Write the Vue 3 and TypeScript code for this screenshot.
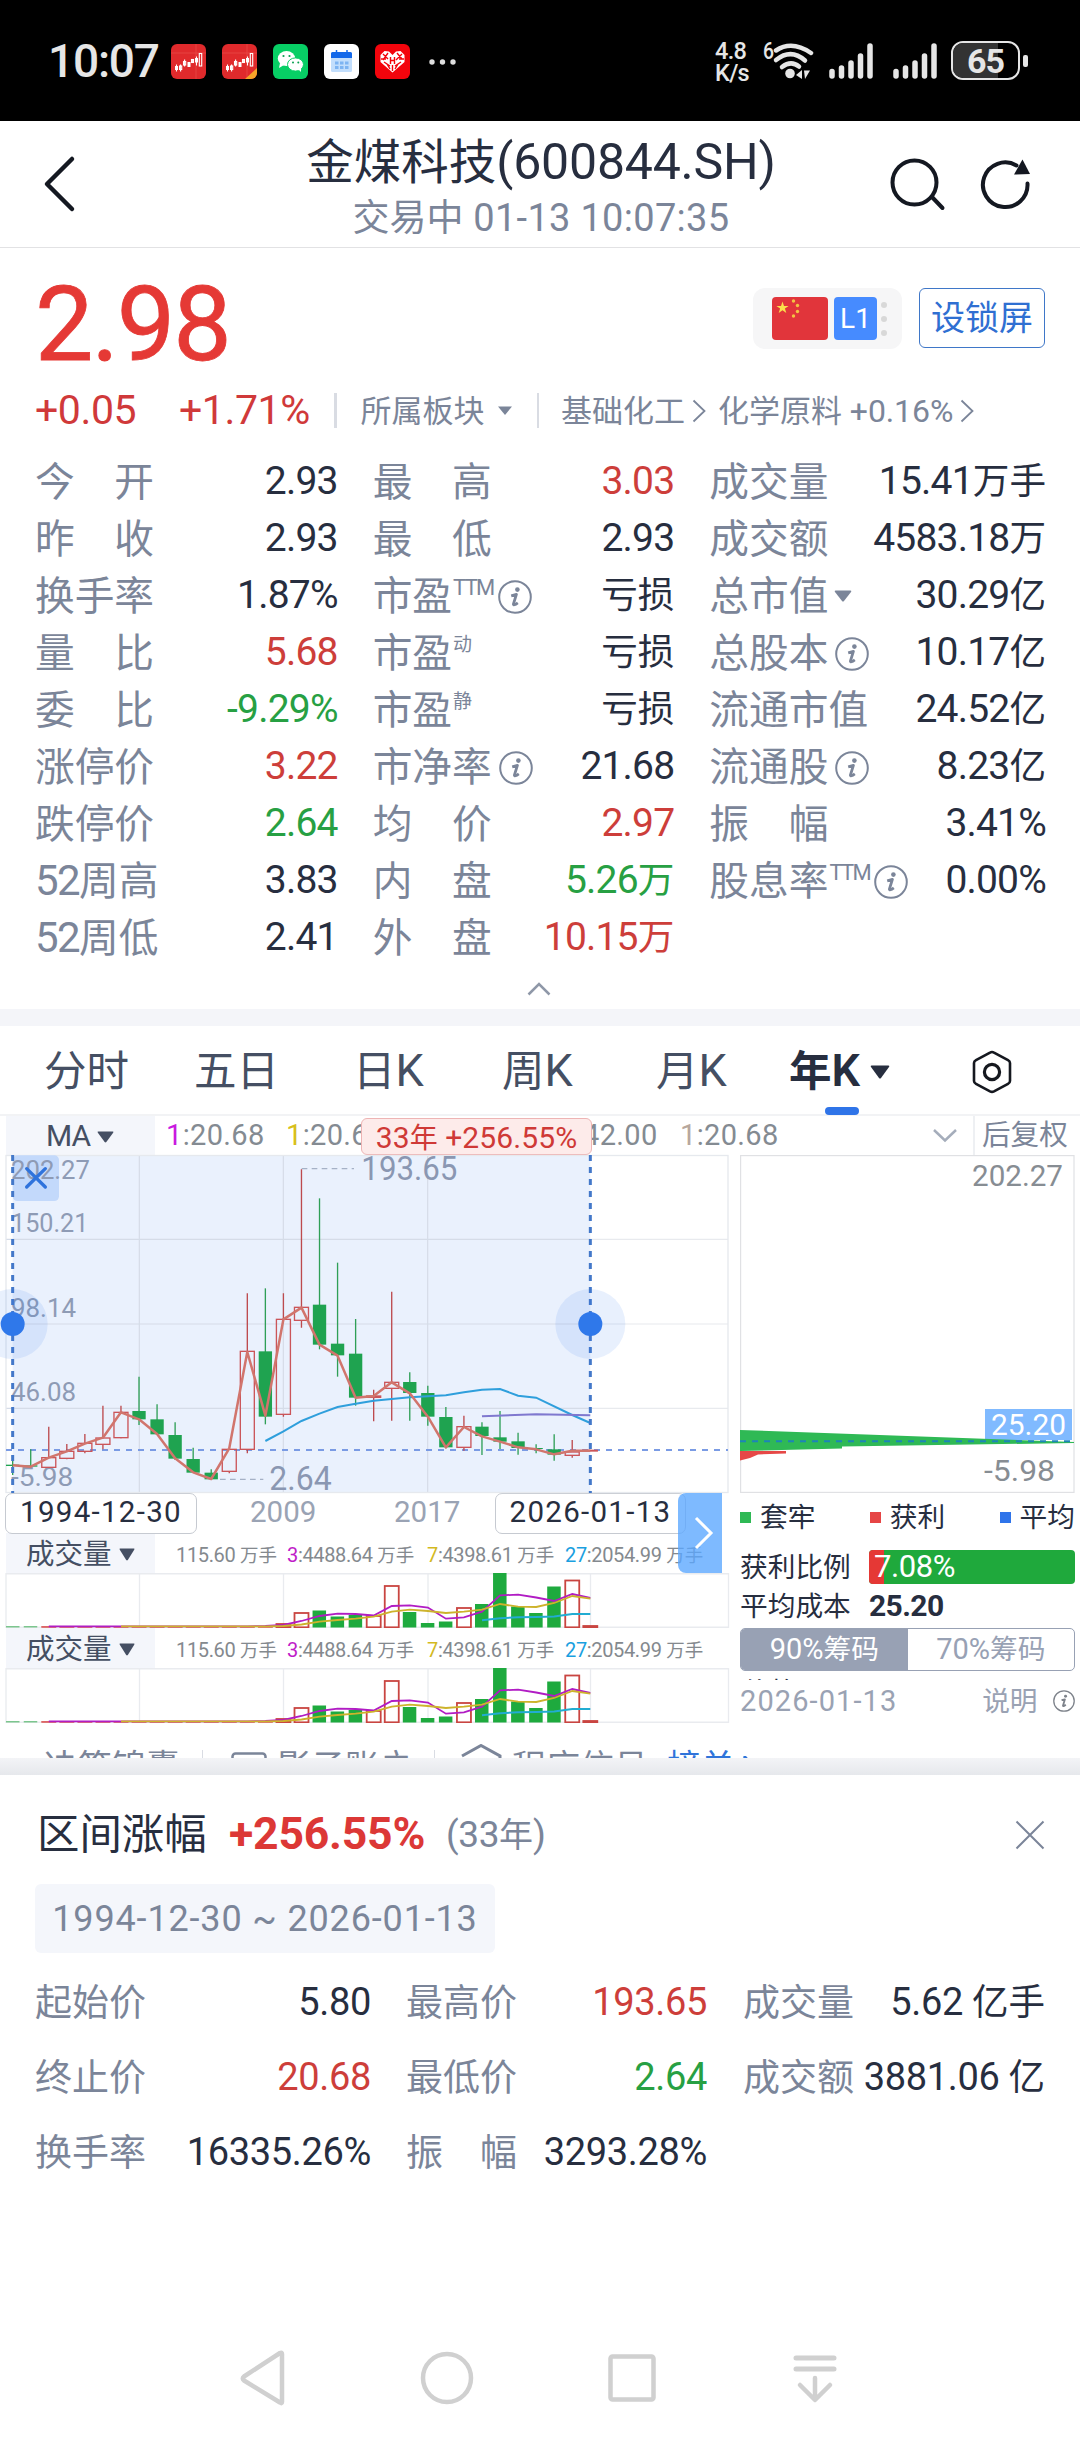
<script setup lang="ts">
import { h, type FunctionalComponent } from 'vue'

// Splits a string into Latin and CJK runs so each can have its own size.
const Tx: FunctionalComponent<{ s: string }> = (props) =>
  h(
    'span',
    { class: 'tx' },
    (props.s.match(/[\u3000-\u9fff]+|[^\u3000-\u9fff]+/g) ?? []).map((run) =>
      /[\u3000-\u9fff]/.test(run) ? h('span', { class: 'cjk' }, run) : run,
    ),
  )
Tx.props = ['s']

const InfoIcon: FunctionalComponent<{ size: number }> = (props) =>
  h('svg', { class: 'info-icon', width: props.size, height: props.size, viewBox: '0 0 34 34' }, [
    h('circle', { cx: 17, cy: 17, r: 15.8, fill: 'none', stroke: 'currentColor', 'stroke-width': 2 }),
    h('circle', { cx: 19.4, cy: 9.6, r: 2.3, fill: 'currentColor' }),
    h('path', {
      d: 'M13.2 15.8 L18.4 14.4 L15.4 24.2 Q15.4 26 19.8 22.8',
      fill: 'none', stroke: 'currentColor', 'stroke-width': 2.8, 'stroke-linejoin': 'round',
    }),
  ])
InfoIcon.props = ['size']

type Tone = 'n' | 'r' | 'g'
interface Quote { label: string; value: string; tone?: Tone; sup?: string; info?: boolean; drop?: boolean }

const quotes: Quote[][] = [
  [
    { label: '今　开', value: '2.93' },
    { label: '昨　收', value: '2.93' },
    { label: '换手率', value: '1.87%' },
    { label: '量　比', value: '5.68', tone: 'r' },
    { label: '委　比', value: '-9.29%', tone: 'g' },
    { label: '涨停价', value: '3.22', tone: 'r' },
    { label: '跌停价', value: '2.64', tone: 'g' },
    { label: '52周高', value: '3.83' },
    { label: '52周低', value: '2.41' },
  ],
  [
    { label: '最　高', value: '3.03', tone: 'r' },
    { label: '最　低', value: '2.93' },
    { label: '市盈', sup: 'TTM', info: true, value: '亏损' },
    { label: '市盈', sup: '动', value: '亏损' },
    { label: '市盈', sup: '静', value: '亏损' },
    { label: '市净率', info: true, value: '21.68' },
    { label: '均　价', value: '2.97', tone: 'r' },
    { label: '内　盘', value: '5.26万', tone: 'g' },
    { label: '外　盘', value: '10.15万', tone: 'r' },
  ],
  [
    { label: '成交量', value: '15.41万手' },
    { label: '成交额', value: '4583.18万' },
    { label: '总市值', drop: true, value: '30.29亿' },
    { label: '总股本', info: true, value: '10.17亿' },
    { label: '流通市值', value: '24.52亿' },
    { label: '流通股', info: true, value: '8.23亿' },
    { label: '振　幅', value: '3.41%' },
    { label: '股息率', sup: 'TTM', info: true, value: '0.00%' },
  ],
]

const range: Quote[][] = [
  [
    { label: '起始价', value: '5.80' },
    { label: '终止价', value: '20.68', tone: 'r' },
    { label: '换手率', value: '16335.26%' },
  ],
  [
    { label: '最高价', value: '193.65', tone: 'r' },
    { label: '最低价', value: '2.64', tone: 'g' },
    { label: '振　幅', value: '3293.28%' },
  ],
  [
    { label: '成交量', value: '5.62 亿手' },
    { label: '成交额', value: '3881.06 亿' },
  ],
]

// K-line drawing units are thirds of a pixel.
const PITCH = 54.15
const cx = (i: number) => 38 + PITCH * i
// [direction, high, body top, body bottom, low]
const candles: [Tone, number, number, number, number][] = [
  ['g', 1275, 1304, 1308, 1335], ['g', 1258, 1306, 1310, 1310], ['r', 1190, 1283, 1312, 1312],
  ['r', 1242, 1264, 1285, 1288], ['r', 1212, 1240, 1264, 1270], ['r', 1127, 1224, 1243, 1258],
  ['r', 1127, 1147, 1223, 1225], ['g', 1040, 1143, 1168, 1185], ['g', 1123, 1168, 1213, 1213],
  ['g', 1177, 1215, 1286, 1290], ['g', 1253, 1287, 1328, 1328], ['g', 1318, 1328, 1348, 1348],
  ['r', 1255, 1258, 1324, 1330], ['r', 790, 964, 1258, 1270], ['g', 775, 964, 1160, 1183],
  ['r', 790, 868, 1153, 1160], ['r', 418, 832, 871, 893], ['g', 505, 824, 944, 958],
  ['g', 698, 941, 976, 1040], ['g', 867, 971, 1103, 1127], ['r', 1079, 1098, 1102, 1174],
  ['r', 785, 1057, 1075, 1172], ['g', 1027, 1056, 1089, 1172], ['g', 1067, 1089, 1160, 1187],
  ['g', 1131, 1161, 1252, 1255], ['r', 1157, 1190, 1252, 1262], ['g', 1177, 1190, 1218, 1275],
  ['g', 1143, 1222, 1235, 1257], ['g', 1208, 1234, 1254, 1274], ['g', 1243, 1254, 1257, 1270],
  ['g', 1213, 1258, 1274, 1292], ['r', 1230, 1266, 1276, 1283], ['r', 1261, 1261, 1263, 1263],
]
const line = (pts: [number, number][]) => pts.map(([i, y]) => `${cx(i).toFixed(1)},${y}`).join(' ')
const closes = [
  1306, 1310, 1283, 1264, 1241, 1223, 1147, 1168, 1212, 1285, 1327, 1347, 1255, 966, 1157, 868, 833,
  944, 977, 1103, 1098, 1057, 1090, 1160, 1252, 1191, 1219, 1235, 1252, 1258, 1273, 1262, 1262,
]
const ma1 = line(closes.map((y, i) => [i, y]))
const ma2 = line([[14, 1233], [15, 1204], [16, 1173], [17, 1151], [18, 1131], [19, 1121], [20, 1112], [22, 1102], [24, 1096], [25, 1087], [26, 1079], [27, 1077], [28, 1097], [29, 1103], [31, 1155], [32, 1179]])
const ma3 = line([[26, 1159], [29, 1153], [32, 1156]])

// Volume bars: direction and top edge, in px from the top of a 55px plot.
const volume: [Tone, number][] = [
  ['g', 53], ['g', 53], ...Array.from({ length: 13 }, (): [Tone, number] => ['r', 53.5]),
  ['r', 51], ['r', 40], ['g', 37.5], ['g', 43.5], ['g', 42], ['r', 43], ['r', 13], ['g', 39],
  ['g', 50], ['g', 48.5], ['r', 35], ['g', 31], ['g', 0], ['g', 33.5], ['g', 40], ['g', 13.5],
  ['r', 7.5], ['r', 53],
]
const vx = (i: number) => 12.7 + 18.05 * i
const vline = (from: number, ys: number[]) => ys.map((y, k) => `${vx(from + k).toFixed(1)},${y}`).join(' ')
const v3 = vline(2, [53.3, 53.3, 53.3, 53.3, 53.3, 53.3, 53.3, 53.3, 53.3, 53.3, 53.3, 53.3, 53, 52, 48, 43, 40.7, 41, 42.5, 33, 32.3, 34.5, 45.7, 44.3, 38.7, 22.3, 21.7, 24.5, 28, 21, 25])
const v7 = vline(6, [53.3, 53.3, 53.3, 53.3, 53.3, 53.3, 53.3, 53.3, 53.3, 53, 51.5, 48.7, 47, 45.7, 43.7, 38.7, 36.7, 38, 40, 38.7, 36.7, 31, 33.7, 34, 30, 23, 25.7])
const v27 = vline(26, [47.3, 45.3, 44.3, 44, 43.5, 41, 41])

const volumeNotes = [
  { k: '', v: '115.60 万手', w: 111, c: '' },
  { k: '3', v: ':4488.64 万手', w: 140, c: '#c01cc8' },
  { k: '7', v: ':4398.61 万手', w: 138, c: '#d3b91f' },
  { k: '27', v: ':2054.99 万手', w: 150, c: '#1aa0e0' },
]
const yLabels = [
  { t: '202.27', y: 448, w: 237 }, { t: '150.21', y: 605, w: 232 }, { t: '98.14', y: 860, w: 195 },
  { t: '46.08', y: 1112, w: 195 }, { t: '-5.98', y: 1367, w: 187 },
]
</script>

<template>
  <div class="screen">
    <header class="status">
      <span class="clock">10:07</span>
      <div class="apps">
        <svg v-for="n in 2" :key="n" width="35" height="35" viewBox="0 0 35 35">
          <rect width="35" height="35" rx="6" fill="#e02a2c" />
          <path d="M0 9H35M25 0V35" stroke="#e84a48" stroke-width=".8" />
          <g fill="#fff"><rect x="4" y="22" width="3" height="4" /><rect x="16.500" y="18" width="3" height="5" /><rect x="24" y="14" width="3" height="4.500" /></g>
          <g fill="none" stroke="#fff" stroke-width="1.1"><rect x="8.500" y="22" width="2.200" height="3.500" /><rect x="12.500" y="17.500" width="2.200" height="3.500" /><rect x="20.500" y="15.500" width="2" height="3" /><rect x="28.300" y="9.500" width="2.400" height="12.500" /><path d="M5.500 20.500v7M9.600 20.500v7M13.600 15.500v7M25.500 12.500v9" /></g>
          <path v-if="n === 2" d="M35 24V29a6 6 0 0 1-6 6H23Z" fill="#f6a428" />
        </svg>
        <svg width="35" height="35" viewBox="0 0 35 35">
          <rect width="35" height="35" rx="6" fill="#07cf65" />
          <ellipse cx="13.500" cy="14.500" rx="8.700" ry="7.500" fill="#fff" /><path d="M7 19l-1 5 5-3z" fill="#fff" />
          <ellipse cx="22.500" cy="20.500" rx="8" ry="6.600" fill="#fff" stroke="#07cf65" stroke-width="1" /><path d="M25 25l3 3v-5z" fill="#fff" />
          <g fill="#07a050"><circle cx="10.500" cy="12" r="1.100" /><circle cx="16.500" cy="12" r="1.100" /><circle cx="20" cy="18.600" r="1" /><circle cx="25.300" cy="18.600" r="1" /></g>
        </svg>
        <svg width="35" height="35" viewBox="0 0 35 35">
          <rect width="35" height="35" rx="6" fill="#fff" />
          <rect x="7" y="8" width="21" height="20" rx="1.500" fill="#c2defc" /><path d="M7 14V9.500A1.500 1.500 0 0 1 8.500 8H26.500A1.500 1.500 0 0 1 28 9.500V14Z" fill="#1268ea" />
          <path d="M12.500 6v3M23 6v3" stroke="#1268ea" stroke-width="1.500" />
          <path d="M11 17.500h3.500v3H11zM16 17.500h3.500v3H16zM21 17.500h3.500v3H21zM11 22h3.500v3H11zM16 22h3.500v3H16zM21 22h3.500v3H21z" fill="#7db4f2" />
        </svg>
        <svg width="35" height="35" viewBox="0 0 35 35">
          <rect width="35" height="35" rx="6" fill="#f3040c" />
          <path d="M17.500 28.500L5.500 18V11L9.500 7L14 7.500L17.500 11L21 7.500L25.500 7L29.500 11V18Z" fill="#fff" />
          <path d="M8 10l5 5M13 9l-5 7M22 9l5 6M27 10l-6 6M9 18l6 4M26 18l-6 4M17.500 21v6M15.500 13v7M19.500 13v7M15.500 16.500h4M6 15h5M24 15h5M12 20l3 5M23 20l-3 5" stroke="#f3040c" stroke-width="1.400" />
        </svg>
      </div>
      <svg class="more" width="28" height="8" viewBox="0 0 28 8" fill="#dedede"><circle cx="4" cy="4" r="2.700" /><circle cx="14.500" cy="4" r="2.700" /><circle cx="25" cy="4" r="2.700" /></svg>
      <div class="speed"><span>4.8</span><span>K/s</span></div>
      <svg class="wifi" width="52" height="38" viewBox="0 0 52 38">
        <text x="1" y="17" font-size="23" font-weight="500" fill="#e6e6e6" textLength="11" lengthAdjust="spacingAndGlyphs">6</text>
        <g fill="none" stroke="#e6e6e6" stroke-width="4.500" stroke-linecap="round"><path d="M14 8.500Q30-2 49 11" /><path d="M14 18Q29 6 43 18.500" /><path d="M20 25Q29 18 37 24.500" /></g>
        <circle cx="28" cy="31.500" r="4.800" fill="#e6e6e6" /><path d="M34 33l6-5v9zM42 28.500h6L43 37z" fill="#e6e6e6" />
      </svg>
      <svg v-for="n in 2" :key="n" class="signal" width="45" height="37" viewBox="0 0 45 37" stroke="#e6e6e6" stroke-width="5.500" stroke-linecap="round">
        <path d="M3 34V29.500M12.500 34V26M22 34V21M31.500 34V14M41 34V4" />
      </svg>
      <div class="battery"><i /><span>65</span></div>
      <b class="nub" />
    </header>

    <nav class="titlebar">
      <svg class="back" width="34" height="60" viewBox="0 0 34 60"><path d="M30 5L5 30L30 55" fill="none" stroke="#141821" stroke-width="4.500" stroke-linecap="round" stroke-linejoin="round" /></svg>
      <div class="titles">
        <Tx class="name" s="金煤科技(600844.SH)" />
        <Tx class="state" s="交易中 01-13 10:07:35" />
      </div>
      <svg class="search" width="58" height="56" viewBox="0 0 58 56" fill="none" stroke="#141821" stroke-width="4" stroke-linecap="round"><circle cx="25.500" cy="25.500" r="22" /><path d="M43 40L53.500 51" /></svg>
      <svg class="reload" width="52" height="56" viewBox="0 0 52 56"><path d="M47.500 26.500A22.300 22.300 0 1 1 36.500 8.500" fill="none" stroke="#141821" stroke-width="4" stroke-linecap="round" /><path d="M42.500 2.500L34 17.500L50 17Z" fill="#141821" /></svg>
    </nav>

    <section class="quote">
      <div class="price-row">
        <span class="price">2.98</span>
        <div class="market">
          <svg width="56" height="43" viewBox="0 0 56 43">
            <rect width="56" height="43" rx="4" fill="#e1353b" />
            <path d="M10.500 4.500l1.500 4.400h4.600l-3.700 2.700 1.400 4.400-3.800-2.700-3.800 2.700 1.400-4.400-3.700-2.700h4.600z" fill="#fbe14b" />
            <g fill="#f4c342"><circle cx="21.500" cy="4" r="1.700" /><circle cx="25.500" cy="8.500" r="1.700" /><circle cx="25.500" cy="14.500" r="1.700" /><circle cx="21.500" cy="19" r="1.700" /></g>
          </svg>
          <span class="level">L1</span>
          <div class="dots"><i /><i /><i /></div>
        </div>
        <button class="lock"><Tx s="设锁屏" /></button>
      </div>

      <div class="change-row">
        <span class="chg a">+0.05</span><span class="chg b">+1.71%</span>
        <i class="bar" />
        <Tx class="board" s="所属板块" />
        <svg class="tri" width="14" height="9" viewBox="0 0 14 9"><path d="M0 .5H14L7 9Z" fill="#7b8599" /></svg>
        <i class="bar second" />
        <Tx class="board base" s="基础化工" />
        <svg class="gt" width="14" height="24" viewBox="0 0 14 24"><path d="M1.500 1.500L12.500 12L1.500 22.500" fill="none" stroke="#7b8599" stroke-width="1.800" /></svg>
        <Tx class="board mat" s="化学原料 +0.16%" />
        <svg class="gt last" width="14" height="24" viewBox="0 0 14 24"><path d="M1.500 1.500L12.500 12L1.500 22.500" fill="none" stroke="#7b8599" stroke-width="1.800" /></svg>
      </div>

      <div class="grid">
        <div v-for="(col, c) in quotes" :key="c" class="col">
          <div v-for="q in col" :key="q.label + (q.sup ?? '')" class="cell">
            <div class="label">
              <Tx :s="q.label" />
              <Tx v-if="q.sup" class="sup" :class="{ ttm: q.sup === 'TTM' }" :s="q.sup" />
              <InfoIcon v-if="q.info" :size="34" />
              <svg v-if="q.drop" class="drop" width="18" height="12" viewBox="0 0 18 12"><path d="M1.500.5H16.500Q18 .5 17 2L10 11Q9 12 8 11L1 2Q0 .5 1.500.5Z" fill="#7b8599" /></svg>
            </div>
            <Tx class="value" :class="q.tone" :s="q.value" />
          </div>
        </div>
      </div>
      <svg class="fold" width="24" height="14" viewBox="0 0 24 14"><path d="M1.500 12.500L12 2L22.500 12.500" fill="none" stroke="#8f98a8" stroke-width="2.500" /></svg>
    </section>

    <div class="gap" />

    <nav class="tabs">
      <Tx class="tab t1" s="分时" /><Tx class="tab t2" s="五日" /><Tx class="tab t3" s="日K" /><Tx class="tab t4" s="周K" /><Tx class="tab t5" s="月K" />
      <div class="tab t6 on"><Tx s="年K" /><svg width="20" height="14" viewBox="0 0 20 14"><path d="M1.500.5H18.500Q20 .5 19 2L11 13Q10 14 9 13L1 2Q0 .5 1.500.5Z" fill="#272e3f" /></svg><i /></div>
      <svg class="hex" width="40" height="44" viewBox="0 0 40 44" fill="none" stroke="#15181f"><path d="M20 2Q21 2 22 2.600L36 10.200Q38 11.300 38 13V31Q38 32.700 36 33.800L22 41.400Q20 42.400 18 41.400L4 33.800Q2 32.700 2 31V13Q2 11.300 4 10.200L18 2.600Q19 2 20 2Z" stroke-width="2.600" /><circle cx="20" cy="22" r="7.600" stroke-width="3.200" /></svg>
    </nav>

    <section class="analysis">
      <div class="ma-row">
        <div class="picker"><span>MA</span><svg width="17" height="12" viewBox="0 0 20 14"><path d="M1.500.5H18.500Q20 .5 19 2L11 13Q10 14 9 13L1 2Q0 .5 1.500.5Z" fill="#454f63" /></svg></div>
        <span class="ma m1"><b style="color: #c91ae0">1</b>:20.68</span>
        <span class="ma m2"><b style="color: #d8bf1c">1</b>:20.68</span>
        <span class="ma m3"><b>1</b>:42.00</span>
        <span class="ma m4"><b style="color: #b7a79d">1</b>:20.68</span>
        <svg class="down" width="26" height="15" viewBox="0 0 26 15"><path d="M2 2L13 12.500L24 2" fill="none" stroke="#a5adbb" stroke-width="2.500" /></svg>
        <span class="adjust"><Tx s="后复权" /></span>
        <div class="range-tag"><Tx s="33年 +256.55%" /></div>
      </div>

      <div class="panes">
        <div class="left">
          <svg class="kline" width="734" height="338" viewBox="0 375 2202 1014">
            <rect x="38" y="375" width="1733" height="1014" fill="#eaf1fd" />
            <g stroke="#d5dce8" stroke-width="3.500"><path d="M18 628H1771M18 882H1771M18 1135H1771M418 375V1389M850 375V1389M1283 375V1389" /></g>
            <path d="M1771 628H2184M1771 882H2184M1771 1135H2184" stroke="#e8eaee" stroke-width="3.500" />
            <rect x="18" y="376.500" width="2166" height="1011" fill="none" stroke="#e6e9ee" stroke-width="4" />
            <rect x="38" y="376" width="139" height="137" rx="14" fill="#c3d9fb" />
            <g fill="#8e9bb5" font-size="76"><text v-for="l in yLabels" :key="l.t" x="33" :y="l.y" :textLength="l.w" lengthAdjust="spacingAndGlyphs">{{ l.t }}</text></g>
            <path d="M80 416L136 471M136 416L80 471" stroke="#2f73dc" stroke-width="10" stroke-linecap="round" />
            <path d="M905 416H1062M660 1348H790" stroke="#a5b1c6" stroke-width="4" stroke-dasharray="17 13" />
            <g fill="#8a97b2" font-size="98"><text x="1084" y="450" textLength="288" lengthAdjust="spacingAndGlyphs">193.65</text><text x="808" y="1380" textLength="187" lengthAdjust="spacingAndGlyphs">2.64</text></g>
            <path d="M18 1260H2184" stroke="#7a9be4" stroke-width="6.500" stroke-dasharray="18 18" />
            <g v-for="(k, i) in candles" :key="i">
              <template v-if="k[0] === 'g'">
                <path :d="`M${cx(i)} ${k[1]}V${k[4]}`" stroke="#2f9f57" stroke-width="4" />
                <rect :x="cx(i) - 20" :y="k[2]" width="40" :height="k[3] - k[2]" fill="#1fa350" />
              </template>
              <template v-else>
                <path :d="`M${cx(i)} ${k[1]}V${k[2]}M${cx(i)} ${k[3]}V${k[4]}`" stroke="#bd4a4e" stroke-width="4" />
                <rect :x="cx(i) - 21" :y="k[2]" width="42" :height="k[3] - k[2]" fill="none" stroke="#cb5559" stroke-width="4" />
              </template>
            </g>
            <polyline :points="ma2" fill="none" stroke="#2f9fdc" stroke-width="6" />
            <polyline :points="ma3" fill="none" stroke="#7f78cf" stroke-width="6" />
            <polyline :points="ma1" fill="none" stroke="#d1756d" stroke-width="7.500" stroke-linejoin="round" />
            <path d="M38 375V1389M1771 375V1389" stroke="#4378c9" stroke-width="9" stroke-dasharray="18 18" />
            <g fill="#2f78ea"><circle cx="38" cy="882" r="105" opacity=".11" /><circle cx="1771" cy="882" r="105" opacity=".11" /><circle cx="38" cy="882" r="36" /><circle cx="1771" cy="882" r="36" /></g>
          </svg>
          <div class="dates">
            <span class="date boxed d1">1994-12-30</span>
            <span class="date d2">2009</span>
            <span class="date d3">2017</span>
            <span class="date boxed d4">2026-01-13</span>
            <button class="expand"><svg width="20" height="34" viewBox="0 0 20 34"><path d="M2 2L17 17L2 32" fill="none" stroke="#fff" stroke-width="3" /></svg></button>
          </div>
          <div v-for="n in 2" :key="n" class="vol">
            <div class="vol-head">
              <div class="picker"><Tx s="成交量" /><svg width="16" height="13" viewBox="0 0 20 14" preserveAspectRatio="none"><path d="M1.500.5H18.500Q20 .5 19 2L11 13Q10 14 9 13L1 2Q0 .5 1.500.5Z" fill="#454f63" /></svg></div>
              <span v-for="v in volumeNotes" :key="v.k" class="note" :style="{ width: v.w + 'px' }"><b :style="{ color: v.c }">{{ v.k }}</b><Tx :s="v.v" /></span>
            </div>
            <svg width="734" height="55" viewBox="0 0 734 55">
              <path d="M6 .75H728.500V54.250H6ZM139.500 0V55M283.500 0V55M428 0V55M590.500 0V55" fill="none" stroke="#e9ebef" stroke-width="1.300" />
              <template v-for="(b, i) in volume" :key="i">
                <rect v-if="b[0] === 'g'" :x="Math.max(6, vx(i) - 7)" :y="b[1]" width="13.500" :height="54.5 - b[1]" :fill="i < 2 ? '#7cc68e' : '#1eaa3e'" />
                <rect v-else :x="vx(i) - 7" :y="b[1]" width="14" :height="54.3 - b[1]" :fill="54.3 - b[1] > 6 ? '#fff' : '#cc4541'" :stroke="i > 14 ? '#c94541' : '#d66'" :stroke-width="i > 14 ? 1.8 : 1" />
              </template>
              <polyline :points="v3" fill="none" stroke="#b11cc4" stroke-width="1.800" />
              <polyline :points="v7" fill="none" stroke="#cdb32c" stroke-width="1.800" />
              <polyline :points="v27" fill="none" stroke="#22acd2" stroke-width="2" />
            </svg>
          </div>
        </div>

        <div class="right">
          <svg width="335" height="338" viewBox="0 0 335 338">
            <rect x=".6" y=".6" width="333.400" height="336.800" fill="none" stroke="#e0e1e4" stroke-width="1.200" />
            <g fill="#878d93" font-size="29"><text x="232" y="31" textLength="91" lengthAdjust="spacingAndGlyphs">202.27</text><text x="244" y="326" textLength="71" lengthAdjust="spacingAndGlyphs">-5.98</text></g>
            <rect x="245" y="254" width="87" height="31" fill="#80baff" />
            <path d="M0 275L334 287V288L102 291.500V293.500L0 296Z" fill="#2fb955" />
            <path d="M0 296L46 296V298.500L18 299.500L10 303L0 305.500Z" fill="#e64847" />
            <path d="M0 286.300H334" stroke="#1d84b8" stroke-width="2" stroke-dasharray="6 6" />
            <text x="251" y="279.500" font-size="30" fill="#fff" textLength="75" lengthAdjust="spacingAndGlyphs">25.20</text>
          </svg>
          <div class="legend">
            <span><i style="background: #2fb955" /><Tx s="套牢" /></span>
            <span><i style="background: #e64545" /><Tx s="获利" /></span>
            <span><i style="background: #2f74ea" /><Tx s="平均" /></span>
          </div>
          <div class="ratio"><Tx class="key" s="获利比例" /><div class="gauge"><i /><span>7.08%</span></div></div>
          <div class="cost"><Tx class="key" s="平均成本" /><b>25.20</b></div>
          <div class="segment"><span class="sel"><Tx s="90%筹码" /></span><span><Tx s="70%筹码" /></span></div>
          <div class="cut"><Tx s="价格" /></div>
          <div class="foot"><span class="day">2026-01-13</span><Tx class="explain" s="说明" /><InfoIcon :size="22" /></div>
        </div>
      </div>

      <div class="tools">
        <Tx class="x1" s="决策锦囊" /><i class="s1" />
        <svg class="x2" width="36" height="30" viewBox="0 0 36 30"><rect x="1.500" y="1.500" width="33" height="27" rx="3" fill="none" stroke="#7b8599" stroke-width="2.500" /></svg>
        <Tx class="x3" s="影子账户" /><i class="s2" />
        <svg class="x4" width="42" height="40" viewBox="0 0 42 40"><path d="M2 12L21 1.500L40 12V34" fill="none" stroke="#7b8599" stroke-width="3" /></svg>
        <Tx class="x5" s="程序信号" /><Tx class="x6" s="榜单" /><svg class="x7" width="12" height="20" viewBox="0 0 12 20"><path d="M2 0L10 9" stroke="#2f74da" stroke-width="3" /></svg>
      </div>
    </section>

    <div class="shade" />

    <section class="sheet">
      <div class="sheet-head">
        <Tx class="h" s="区间涨幅" /><span class="pct">+256.55%</span><Tx class="yrs" s="(33年)" />
        <svg class="close" width="30" height="30" viewBox="0 0 30 30"><path d="M1.500 1.500L28.500 28.500M28.500 1.500L1.500 28.500" stroke="#7b8599" stroke-width="2" /></svg>
      </div>
      <div class="chip"><span>1994-12-30 ~ 2026-01-13</span></div>
      <div class="grid small">
        <div v-for="(col, c) in range" :key="c" class="col">
          <div v-for="q in col" :key="q.label" class="cell"><Tx class="label" :s="q.label" /><Tx class="value" :class="q.tone" :s="q.value" /></div>
        </div>
      </div>
    </section>

    <footer class="sysnav">
      <svg class="n1" width="46" height="56" viewBox="0 0 46 56"><path d="M42 4V52Q42 54 40 52.500L4 30.500Q1.500 28.500 4 26.500L40 3Q42 2 42 4Z" /></svg>
      <svg class="n2" width="54" height="54" viewBox="0 0 54 54"><circle cx="27" cy="27" r="24" /></svg>
      <svg class="n3" width="48" height="48" viewBox="0 0 48 48"><rect x="2.500" y="2.500" width="43" height="43" rx="2" /></svg>
      <svg class="n4" width="46" height="50" viewBox="0 0 46 50"><path d="M4 4H42M4 15H42" stroke-width="5" /><path d="M23 24V45M8 31L23 46L38 31" /></svg>
    </footer>
  </div>
</template>

<style>
body { margin: 0; background: #fff; }
.tx { white-space: pre; }
.tx .cjk { font-size: var(--cjk, .94em); line-height: 0; letter-spacing: 0; }
.info-icon { flex: none; display: block; }
</style>

<style scoped>
.screen { width: 1080px; height: 2440px; overflow: hidden; display: flex; flex-direction: column; background: #fff; color: #272e3f; font-family: Roboto, "Noto Sans CJK SC", sans-serif; line-height: 1; white-space: nowrap; }
.screen > * { flex: none; }
svg { display: block; flex: none; }
b, i { font-style: normal; font-weight: inherit; }
button { font: inherit; margin: 0; padding: 0; border: 0; background: none; }

.status { height: 121px; background: #000; color: #e6e6e6; display: flex; align-items: center; }
.clock { width: 123px; padding-left: 48px; font-size: 46px; font-weight: 500; letter-spacing: -1.2px; }
.apps { display: flex; gap: 16px; margin-top: 2px; }
.more { margin-left: 18px; margin-top: 2px; }
.speed { margin-left: 259px; width: 45px; display: flex; flex-direction: column; font-size: 23.500px; line-height: 22px; font-weight: 500; letter-spacing: -.7px; margin-top: 3px; }
.wifi { margin-left: 2px; width: 52px; }
.signal { margin-left: 15px; margin-right: 4px; }
.battery { position: relative; box-sizing: border-box; width: 69px; height: 39px; margin-left: 9px; border: 2.5px solid #e6e6e6; border-radius: 12px; display: flex; align-items: center; justify-content: center; font-size: 34px; font-weight: 700; letter-spacing: -1px; overflow: hidden; }
.battery i { position: absolute; left: 0; top: 0; bottom: 0; width: 45px; background: #333; }
.battery span { position: relative; }
.nub { width: 5px; height: 12px; margin-left: 3px; border-radius: 2px; background: #e6e6e6; }

.titlebar { box-sizing: border-box; height: 127px; border-bottom: 1px solid #e2e2e4; display: flex; align-items: flex-start; }
.back { margin: 33px 0 0 42px; }
.titles { margin-left: 232px; width: 466px; padding-top: 15px; display: flex; flex-direction: column; align-items: center; }
.name { font-size: 50px; line-height: 52px; letter-spacing: -.2px; --cjk: 47.5px; }
.state { margin-top: 8px; font-size: 38px; line-height: 44px; color: #7b8599; --cjk: 37px; letter-spacing: .3px; }
.search { margin: 36px 0 0 115px; }
.reload { margin: 36px 0 0 33px; }

.quote { height: 761px; display: flex; flex-direction: column; }
.price-row { height: 123px; padding: 0 35px; display: flex; align-items: flex-start; }
.price { width: 718px; margin-top: 25px; color: #e53935; font-size: 104px; letter-spacing: -2px; -webkit-text-stroke: .8px #e53935; }
.market { box-sizing: border-box; margin-top: 40px; width: 149px; height: 61px; padding-left: 19px; border-radius: 12px; background: #f6f6f7; display: flex; align-items: center; }
.level { margin-left: 6px; width: 43px; height: 43px; border-radius: 4px; background: #468bff; color: #fff; font-size: 28px; line-height: 43px; text-align: center; }
.dots { margin-left: 4px; display: flex; flex-direction: column; gap: 8px; }
.dots i { width: 6px; height: 6px; border-radius: 50%; background: #d8d8d8; }
.lock { box-sizing: border-box; width: 126px; height: 60px; margin: 40px 0 0 17px; border: 1.5px solid #3f77c8; border-radius: 6px; font-size: 34px; color: #2f6fd2; --cjk: 34px; line-height: 1; }
.change-row { height: 79px; padding-left: 35px; display: flex; align-items: center; color: #7b8599; }
.chg { color: #d0393a; font-size: 41px; letter-spacing: -.4px; }
.a { width: 144px; } .b { width: 155px; }
.bar { width: 2.5px; height: 35px; background: #d9dce3; }
.board { margin-left: 24px; font-size: 32px; --cjk: 31px; letter-spacing: -.1px; }
.base { margin-left: 22px; }
.tri { margin-left: 13px; }
.bar.second { margin-left: 25px; }
.gt { margin-left: 7px; } .mat { margin-left: 12px; } .gt.last { margin-left: 7px; }
.grid { display: flex; gap: 36px; padding: 3px 35px 0; }
.col { width: 302px; display: flex; flex-direction: column; }
.col:nth-child(3) { width: 336px; }
.col:nth-child(2) { width: 301px; }
.cell { height: 57px; display: flex; align-items: center; justify-content: space-between; }
.label { display: flex; align-items: center; color: #7b8599; font-size: 42px; --cjk: 39.700px; letter-spacing: -1.600px; }
span.label { display: inline; }
.label .info-icon { margin-left: 7px; margin-top: 2px; }
.sup { font-size: 21px; --cjk: 19px; align-self: flex-start; margin-left: 1px; letter-spacing: 0; margin-top: 2px; }
.sup.ttm { width: 38px; font-size: 22px; letter-spacing: -1.700px; }
.drop { margin-left: 6px; margin-top: 1px; }
.value { font-size: 39px; letter-spacing: -.8px; --cjk: 36.6px; margin-right: -1px; }
.r { color: #cd3e3a; } .g { color: #27a043; }
.fold { margin: 16px 0 0 527px; }
.gap { height: 17px; background: #f4f5f9; }

.tabs { height: 90px; display: flex; align-items: center; font-size: 45px; color: #454f63; --cjk: 42.500px; box-sizing: border-box; border-bottom: 2px solid #f2f3f5; }
.t1 { margin-left: 44px; width: 150px; } .t2 { width: 159px; } .t3 { width: 149px; } .t4 { width: 154px; } .t5 { width: 133px; }
.t6 { position: relative; width: 190px; height: 88px; display: flex; align-items: center; color: #272e3f; font-weight: 600; }
.t6 svg { margin-left: 10px; margin-top: 4px; }
.t6 i { position: absolute; left: 36px; bottom: -1px; width: 34px; height: 8px; border-radius: 4px; background: #2f74e8; }
.hex { margin-left: -7px; margin-top: 4px; }

.analysis { height: 642px; overflow: hidden; }
.ma-row { position: relative; height: 39px; display: flex; align-items: center; font-size: 29px; color: #848b92; }
.picker { box-sizing: border-box; width: 149px; height: 40px; margin-left: 6px; background: #f4f6fb; color: #454f63; display: flex; align-items: center; }
.ma-row .picker { padding-left: 40px; letter-spacing: -1px; font-size: 30px; }
.ma-row .picker svg { margin-left: 7px; margin-top: 3px; }
.ma { letter-spacing: .35px; }
.m1 { margin-left: 11px; width: 120px; } .m2 { width: 273px; } .m3 { width: 121px; } .m4 { width: 252px; }
.down { margin-right: 15px; }
.adjust { height: 39px; padding-left: 7px; border-left: 2px solid #eef0f3; color: #7b8599; --cjk: 28.600px; display: flex; align-items: center; }
.range-tag { position: absolute; left: 361px; top: 2px; box-sizing: border-box; width: 231px; height: 37px; border: 1px solid #eeb4b4; border-radius: 6px; background: #fdebea; color: #cf3936; font-size: 30px; --cjk: 28px; line-height: 37px; text-align: center; letter-spacing: .1px; }
.panes { display: flex; height: 571px; }
.left { width: 734px; margin-right: 6px; display: flex; flex-direction: column; }
.kline { overflow: visible; position: relative; z-index: 1; font-family: Roboto, sans-serif; }
.dates { position: relative; height: 40px; display: flex; align-items: center; color: #9aa3b4; font-size: 29.500px; }
.boxed { box-sizing: border-box; height: 41px; border: 1px solid #c6cad1; border-radius: 7px; color: #272e3f; display: flex; align-items: center; justify-content: center; letter-spacing: 1.300px; background: #fff; }
.d1 { margin-left: 5px; width: 192px; } .d2 { margin-left: 53px; width: 144px; } .d3 { width: 101px; } .d4 { width: 191px; }
.expand { position: absolute; left: 678px; top: 0; width: 44px; height: 80px; border-radius: 8px 0 0 8px; background: rgba(90, 166, 255, .78); z-index: 2; padding-left: 16px; }
.vol { height: 95px; }
.vol-head { height: 40px; display: flex; align-items: center; font-size: 20px; color: #84898e; --cjk: 18.5px; }
.vol-head .picker { font-size: 29px; padding: 2px 0 0 20px; --cjk: 28.500px; margin-right: 21px; }
.vol-head .picker svg { margin-left: 7px; }
.note { padding-top: 4px; letter-spacing: -.35px; }
.right { width: 335px; display: flex; flex-direction: column; font-size: 29px; --cjk: 27.700px; }
.right > svg { font-family: Roboto, sans-serif; }
.legend { height: 48px; display: flex; justify-content: space-between; align-items: center; padding-bottom: 3px; }
.legend span { display: flex; align-items: center; }
.legend span span { display: inline; }
.legend i { width: 11px; height: 11px; margin-right: 9px; }
.ratio { height: 46px; display: flex; align-items: center; }
.key { width: 129px; }
.gauge { position: relative; width: 206px; height: 34px; border-radius: 4px; background: #1fa93c; overflow: hidden; color: #fff; font-size: 31px; line-height: 34px; }
.gauge i { position: absolute; left: 0; top: 0; width: 14.5px; height: 34px; background: #e53835; }
.gauge span { position: relative; padding-left: 5px; letter-spacing: -.4px; }
.cost { height: 38px; box-sizing: border-box; padding-bottom: 6px; display: flex; align-items: center; }
.cost b { font-weight: 700; font-size: 30px; letter-spacing: -.6px; }
.segment { box-sizing: border-box; height: 43px; border: 1.5px solid #98a1b4; border-radius: 5px; display: flex; color: #98a1b4; overflow: hidden; }
.segment > span { flex: 1; display: flex; align-items: center; justify-content: center; }
.segment .sel { background: #98a1b4; color: #fff; }
.cut { height: 9px; overflow: hidden; padding: 8px 0 0 2px; box-sizing: border-box; line-height: 26px; }
.foot { height: 42px; display: flex; align-items: center; color: #9aa2b3; }
.day { width: 246px; letter-spacing: 1.100px; font-size: 29px; }
.explain { width: 72px; }
.foot .info-icon { color: #7d828a; }
.tools { height: 32px; overflow: hidden; display: flex; align-items: flex-start; color: #7b8599; font-size: 34px; --cjk: 34px; }
.tools .tx { line-height: 34px; margin-top: 24px; }
.tools i { width: 1px; height: 20px; margin-top: 24px; background: #d9dce3; }
.x1 { margin-left: 44px; width: 158px; }
.x2 { margin: 26px 10px 0 28px; } .x3 { width: 157px; }
.x4 { margin: 18px 10px 0 25px; } .x5 { width: 155px; } .x6 { color: #2f74da; width: 75px; } .x7 { margin-top: 30px; }
.shade { height: 17px; background: linear-gradient(#f3f4f7, #e6e8ec); }

.sheet { height: 520px; background: #fff; }
.sheet-head { height: 109px; padding: 10px 35px 0 37px; box-sizing: border-box; display: flex; align-items: center; }
.h { font-size: 43px; --cjk: 42.400px; width: 192px; }
.pct { color: #dc3836; font-weight: 700; font-size: 44.500px; letter-spacing: -.2px; width: 217px; }
.yrs { font-size: 37px; --cjk: 34px; color: #7b8599; flex: 1; letter-spacing: -.4px; }
.chip { box-sizing: border-box; margin-left: 35px; width: 460px; height: 69px; border-radius: 6px; background: #f4f6fb; color: #7b8599; font-size: 36px; letter-spacing: .85px; display: flex; align-items: center; justify-content: center; }
.small { padding-top: 11.500px; }
.small .cell { height: 75px; }
.small .label { --cjk: 37px; }
.small .value { font-size: 38px; letter-spacing: -.35px; --cjk: 36.500px; margin-right: 0; }
.small .col:nth-child(1) { width: 336px; } .small .col:nth-child(2) { width: 301px; margin-left: -1px; padding-right: 0; } .small .col:nth-child(3) { width: 302px; }
.sysnav { height: 145px; display: flex; align-items: flex-start; }
.sysnav svg { fill: none; stroke: #d0d0d0; stroke-width: 4.500; stroke-linecap: round; stroke-linejoin: round; }
.n1 { margin: 55px 0 0 240px; } .n2 { margin: 56px 0 0 134px; } .n3 { margin: 59px 0 0 134px; } .n4 { margin: 59px 0 0 136px; }
</style>
